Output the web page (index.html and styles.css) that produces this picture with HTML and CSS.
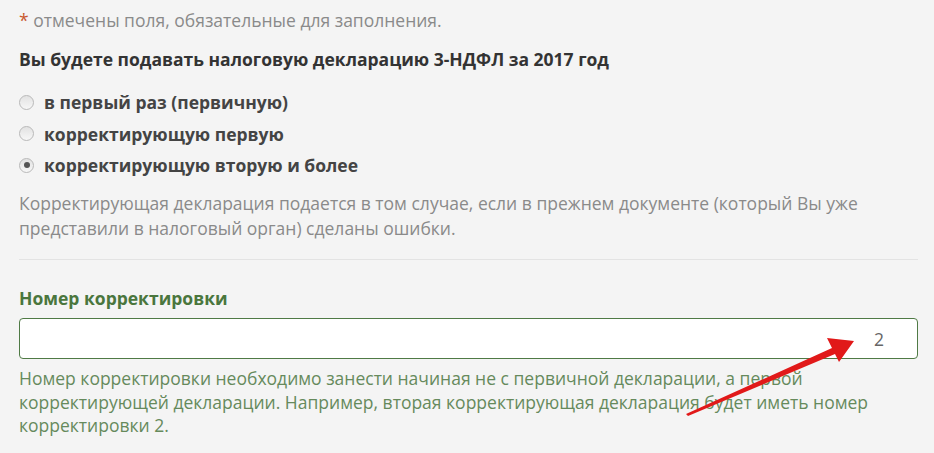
FILE: index.html
```html
<!DOCTYPE html>
<html lang="ru">
<head>
<meta charset="utf-8">
<link rel="stylesheet" href="styles.css">
</head>
<body>
<div class="page">
  <p class="note"><span class="req">*</span> отмечены поля, обязательные для заполнения.</p>
  <p class="question">Вы будете подавать налоговую декларацию 3-НДФЛ за 2017 год</p>
  <div class="radios">
    <label class="radio"><span class="dot"></span>в первый раз (первичную)</label>
    <label class="radio"><span class="dot"></span>корректирующую первую</label>
    <label class="radio"><span class="dot checked"></span>корректирующую вторую и более</label>
  </div>
  <p class="desc">Корректирующая декларация подается в том случае, если в прежнем документе (который Вы уже представили в налоговый орган) сделаны ошибки.</p>
  <hr class="sep">
  <div class="field">
    <div class="field-label">Номер корректировки</div>
    <div class="input"><span class="value">2</span></div>
    <p class="help">Номер корректировки необходимо занести начиная не с первичной декларации, а первой корректирующей декларации. Например, вторая корректирующая декларация будет иметь номер корректировки 2.</p>
  </div>
  <svg class="arrow" width="180" height="90" viewBox="0 0 180 90">
    <path d="M2 88 L148 22 L143 12 L170 15 L155 36 L151 28 L4 90 Z" fill="#e11919"/>
  </svg>
</div>
</body>
</html>
```
FILE: styles.css
```css
html, body {
  margin: 0;
  padding: 0;
  background: #f4f4f4;
}
body {
  font-family: "Open Sans", "DejaVu Sans", sans-serif;
  font-size: 17.5px;
  color: #333;
}
.page {
  position: relative;
  padding: 8px 16px 0 19px;
  width: 899px;
}
.note {
  margin: 0;
  line-height: 24px;
  color: #8a8a8a;
}
.req {
  color: #c8592f;
}
.question {
  margin: 15px 0 0;
  line-height: 24px;
  font-weight: 700;
  color: #333;
}
.radios {
  margin-top: 19px;
  display: flex;
  flex-direction: column;
  gap: 7.5px;
}
.radio {
  display: flex;
  align-items: center;
  gap: 10px;
  line-height: 24px;
  font-weight: 700;
  color: #444;
}
.dot {
  width: 13px;
  height: 13px;
  border-radius: 50%;
  border: 1px solid #b9b9b9;
  background: linear-gradient(#e2e2e2, #f7f7f7);
  display: flex;
  align-items: center;
  justify-content: center;
  box-sizing: content-box;
}
.dot.checked::after {
  content: "";
  width: 6px;
  height: 6px;
  border-radius: 50%;
  background: #555;
}
.desc {
  margin: 14px 0 0;
  line-height: 25px;
  color: #8a8a8a;
}
.sep {
  margin: 18px 0 0;
  border: 0;
  height: 1px;
  background: #e3e3e3;
}
.field {
  margin-top: 26px;
}
.field-label {
  line-height: 24px;
  font-weight: 700;
  color: #4a763d;
}
.input {
  margin-top: 8px;
  height: 39px;
  border: 1px solid #4f7a45;
  border-radius: 4px;
  background: #fff;
  display: flex;
  align-items: center;
  justify-content: flex-end;
  padding-right: 33px;
}
.value {
  color: #666;
}
.help {
  margin: 8px 0 0;
  line-height: 23.5px;
  color: #668a5c;
}
.arrow {
  position: absolute;
  left: 684px;
  top: 326px;
}
```
